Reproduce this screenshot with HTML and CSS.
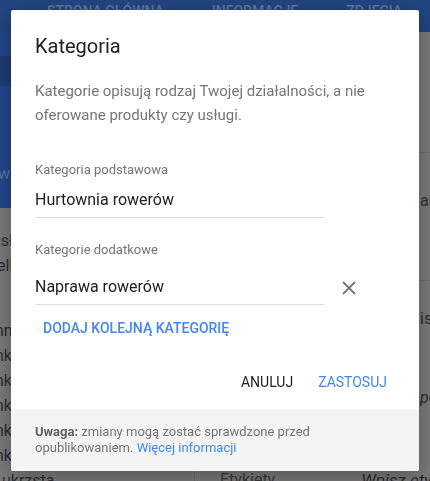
FILE: index.html
```html
<!DOCTYPE html>
<html lang="pl">
<head>
<meta charset="utf-8">
<title>Kategoria</title>
<link rel="stylesheet" href="styles.css">
</head>
<body>
<div class="page" aria-hidden="true">
  <header class="topbar">
    <nav class="nav">
      <span class="nav-item n1">STRONA GŁÓWNA</span>
      <span class="nav-item n2">INFORMACJE</span>
      <span class="nav-item n3">ZDJĘCIA</span>
    </nav>
  </header>
  <div class="main">
    <aside class="side">
      <div class="hero">
        <div class="hero-art"></div>
        <div class="hero-text">wa</div>
      </div>
      <ul class="side-list">
        <li class="s-usl">usł</li>
        <li class="s-sell">ell<span class="mark"></span></li>
        <li class="s-gap"></li>
        <li>nn</li>
        <li>nk</li>
        <li>nk</li>
        <li>nk</li>
        <li>nk</li>
        <li>nk</li>
        <li class="s-last">ukrzsta</li>
      </ul>
    </aside>
    <section class="content">
      <div class="row r1"></div>
      <div class="row r2"><span class="rv">ar</span></div>
      <div class="row r3"><span class="rv">is</span></div>
      <div class="row r4"><span class="rv it">pc</span></div>
      <div class="row r5"><span class="rl">Etykiety</span><span class="rv it">Wpisz ety</span></div>
    </section>
  </div>
</div>

<div class="dialog" role="dialog" aria-labelledby="dlg-title">
  <div class="dialog-body">
    <h2 class="dialog-title" id="dlg-title">Kategoria</h2>
    <p class="dialog-desc">Kategorie opisują rodzaj Twojej działalności, a nie oferowane produkty czy usługi.</p>

    <div class="field-label first">Kategoria podstawowa</div>
    <div class="field-input f1">Hurtownia rowerów</div>

    <div class="field-label second">Kategorie dodatkowe</div>
    <div class="field-row">
      <div class="field-input f2">Naprawa rowerów</div>
      <button class="icon-btn" aria-label="Usuń">
        <svg width="14" height="14" viewBox="0 0 14 14"><path d="M1 1 L13 13 M13 1 L1 13" stroke="#757575" stroke-width="1.8" fill="none"/></svg>
      </button>
    </div>

    <button class="text-btn add">DODAJ KOLEJNĄ KATEGORIĘ</button>

    <div class="actions">
      <button class="text-btn cancel">ANULUJ</button>
      <button class="text-btn apply">ZASTOSUJ</button>
    </div>
  </div>
  <div class="dialog-footer">
    <b>Uwaga:</b> zmiany mogą zostać sprawdzone przed opublikowaniem. <a href="#">Więcej informacji</a>
  </div>
</div>
</body>
</html>
```

FILE: styles.css
```css
* { box-sizing: border-box; }
html, body { margin: 0; padding: 0; }
body {
  width: 430px;
  height: 481px;
  overflow: hidden;
  background: #7a7a7a;
  font-family: Roboto, "Noto Sans", Arial, sans-serif;
}

/* background page (dimmed behind the dialog) */
.page { width: 430px; height: 481px; overflow: hidden; }
.topbar { height: 32px; background: #22447e; }
.nav { display: flex; padding-top: 3px; font-size: 14px; font-weight: 500; color: #5f76a0; }
.nav-item.n1 { margin-left: 47px; }
.nav-item.n2 { margin-left: 48px; }
.nav-item.n3 { margin-left: 48px; }

.main { display: grid; grid-template-columns: 195px 1fr; }
.side { border-right: 1px solid #6a6a6a; }
.hero { height: 176px; background: #23468a; display: flex; flex-direction: column; }
.hero-art { height: 30px; margin-top: 24px; width: 11px; background: #1e3c74; }
.hero-text { margin-top: 78px; margin-left: -2px; font-size: 16px; color: #5a74a6; }
.side-list { list-style: none; margin: 0; padding: 0; font-size: 16px; color: #2a2e33; }
.side-list li { height: 25px; line-height: 25px; width: max-content; margin-left: -5px; }
.side-list .s-usl { margin-top: 20px; margin-left: -8px; }
.side-list .s-sell { margin-left: -3px; display: flex; align-items: center; }
.mark { display: inline-block; width: 2px; height: 14px; background: #8a6a2a; margin-left: 1px; }
.side-list .s-gap { height: 40px; }
.side-list .s-last { margin-left: 2px; }

.content { display: flex; flex-direction: column; font-size: 16px; color: #2c2c2c; }
.row { border-top: 1px solid #6a6a6a; display: flex; align-items: flex-start; }
.r1 { height: 120px; border-top: 0; }
.r2 { height: 128px; padding-top: 38px; }
.r3 { height: 80px; padding-top: 28px; }
.r4 { height: 100px; border-top: 0; padding-top: 28px; }
.r5 { height: 40px; border-top: 0; padding-top: 10px; }
.rv { margin-left: 225px; }
.rl { margin-left: 25px; color: #3a3a3a; }
.r5 .rv { margin-left: 86px; font-size: 17px; }
.it { font-style: italic; }

/* dialog */
.dialog {
  position: fixed;
  left: 11px;
  top: 10px;
  width: 408px;
  height: 461px;
  background: #fff;
  border-radius: 2px;
  box-shadow: 0 6px 20px rgba(0,0,0,0.3);
  display: flex;
  flex-direction: column;
  overflow: hidden;
}
.dialog-body {
  flex: 1;
  padding: 22px 24px 0 24px;
  display: flex;
  flex-direction: column;
}
.dialog-title {
  margin: 0;
  font-size: 20px;
  line-height: 28px;
  font-weight: 400;
  color: #212121;
}
.dialog-desc {
  margin: 19px 0 0 0;
  font-size: 15px;
  line-height: 24px;
  color: #757575;
}
.field-label {
  font-size: 13px;
  line-height: 16px;
  color: #757575;
}
.field-label.first { margin-top: 35px; }
.field-label.second { margin-top: 24px; }
.field-input {
  width: 290px;
  font-size: 16px;
  line-height: 24px;
  color: #212121;
  padding-bottom: 5px;
  border-bottom: 1px solid #e0e0e0;
}
.field-input.f1 { margin-top: 10px; }
.field-row { display: flex; align-items: flex-end; margin-top: 17px; }
.icon-btn {
  border: 0;
  background: transparent;
  padding: 0;
  margin: 0 0 10px 17px;
  width: 14px;
  height: 14px;
  display: flex;
}
.text-btn {
  border: 0;
  background: transparent;
  font-family: inherit;
  font-size: 14px;
  font-weight: 500;
  height: 36px;
  line-height: 36px;
  padding: 0 8px;
  cursor: pointer;
}
.add {
  align-self: flex-start;
  margin-top: 5px;
  color: #4285f4;
}
.actions {
  display: flex;
  justify-content: flex-end;
  gap: 9px;
  margin-top: 18px;
}
.cancel { color: #212121; font-weight: 400; }
.apply { color: #4285f4; font-weight: 400; }

.dialog-footer {
  height: 62px;
  background: #f4f4f4;
  padding: 15px 24px 0 24px;
  font-size: 13px;
  line-height: 15.5px;
  color: #757575;
}
.dialog-footer b { color: #616161; font-weight: 700; }
.dialog-footer a { color: #4285f4; text-decoration: none; }
```
